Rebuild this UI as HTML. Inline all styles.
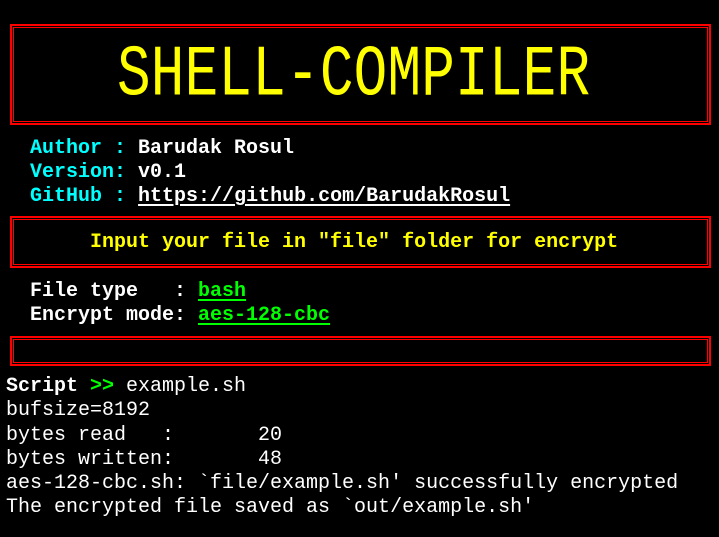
<!DOCTYPE html>
<html><head><style>
body{margin:0;background:#000;width:719px;height:537px;overflow:hidden;position:relative;font-family:"Liberation Mono","DejaVu Sans Mono",monospace;font-size:20px;color:#fff}
.box{position:absolute;left:10px;width:697px;border:2px solid #f00}
.box::after{content:"";position:absolute;left:1px;top:1px;right:1px;bottom:1px;border:1px solid #f00}
.l{position:absolute;left:6px;white-space:pre;line-height:24px;height:24px}
b{font-weight:bold}
.c{color:#0ff}.y{color:#ff0}.g{color:#0f0}
u{text-underline-offset:3px}
.t{position:absolute;left:117px;top:40px;width:473px;height:70px;color:#ff0;font-size:56px;line-height:70px;white-space:pre;transform:scaleY(1.3);transform-origin:center;font-weight:normal;letter-spacing:0.2px}
</style></head><body>
<div class="box" style="top:24px;height:97px"></div>
<div class="t">SHELL-COMPILER</div>
<div class="l" style="top:137px"><b><span class="c">  Author :</span> Barudak Rosul</b></div>
<div class="l" style="top:161px"><b><span class="c">  Version:</span> v0.1</b></div>
<div class="l" style="top:185px"><b><span class="c">  GitHub :</span> <u>https://github.com/BarudakRosul</u></b></div>
<div class="box" style="top:216px;height:48px"></div>
<div class="l y" style="top:231px"><b>       Input your file in "file" folder for encrypt</b></div>
<div class="l" style="top:280px"><b>  File type   : <u class="g">bash</u></b></div>
<div class="l" style="top:304px"><b>  Encrypt mode: <u class="g">aes-128-cbc</u></b></div>
<div class="box" style="top:336px;height:26px"></div>
<div class="l" style="top:375px"><b>Script <span class="g">&gt;&gt;</span></b> example.sh</div>
<div class="l" style="top:399px">bufsize=8192</div>
<div class="l" style="top:424px">bytes read   :       20</div>
<div class="l" style="top:448px">bytes written:       48</div>
<div class="l" style="top:472px">aes-128-cbc.sh: `file/example.sh' successfully encrypted</div>
<div class="l" style="top:496px">The encrypted file saved as `out/example.sh'</div>
</body></html>
